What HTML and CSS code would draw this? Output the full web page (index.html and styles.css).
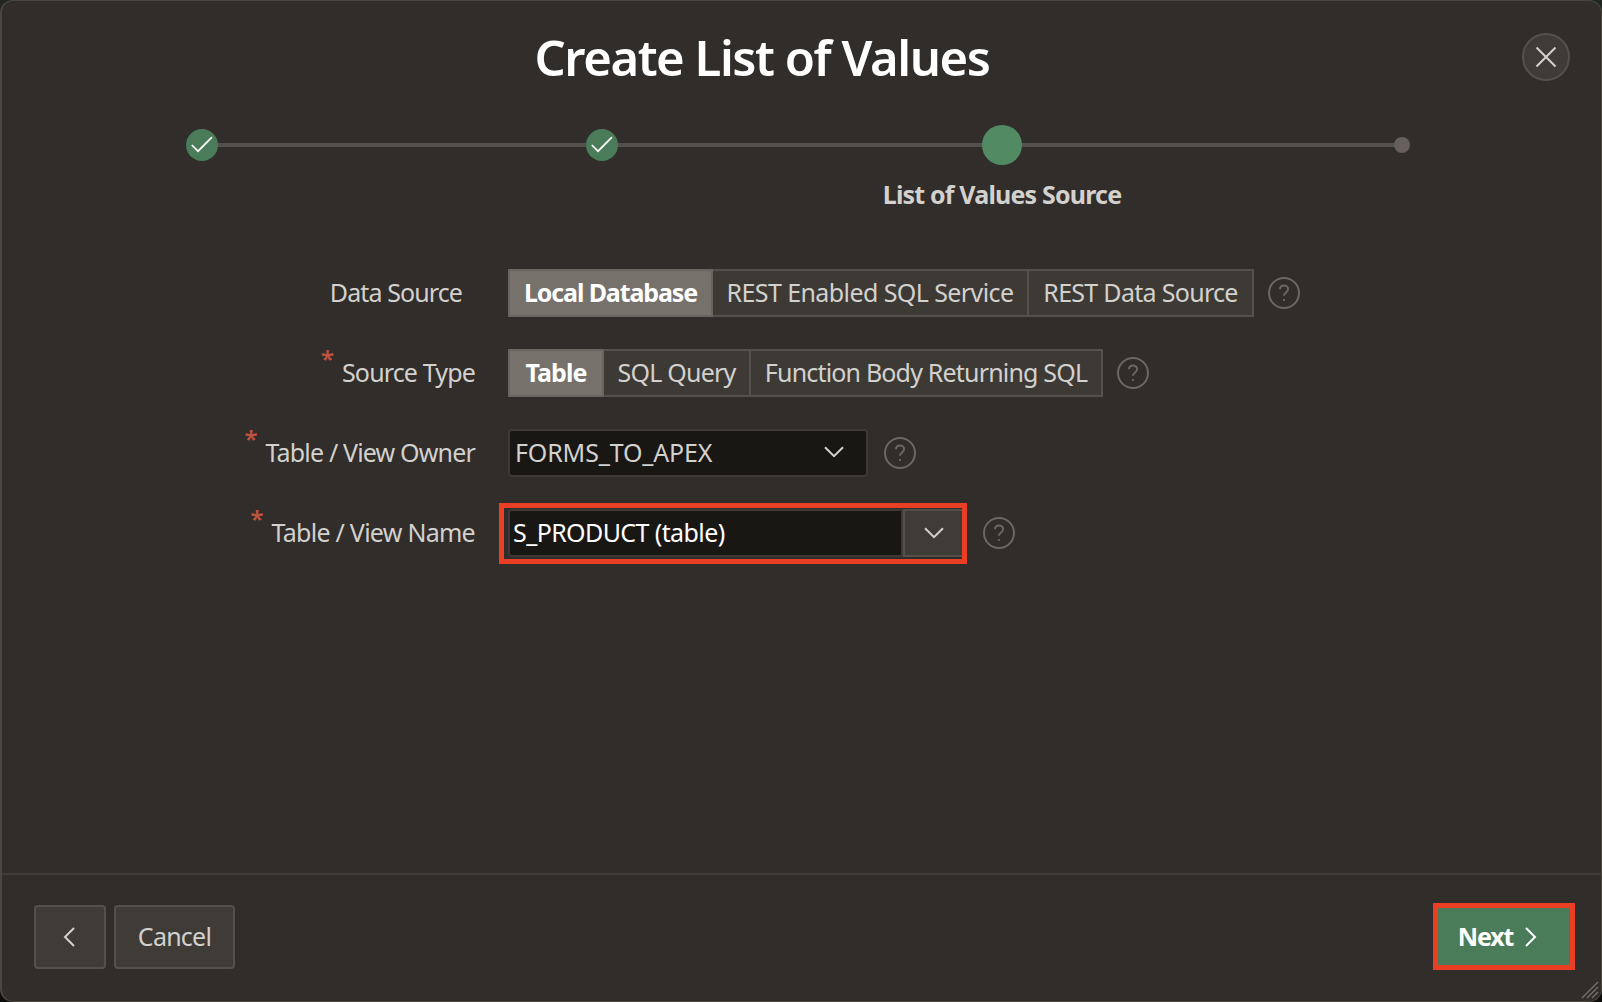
FILE: index.html
```html
<!DOCTYPE html>
<html lang="en">
<head>
<meta charset="utf-8">
<title>Create List of Values</title>
<link rel="stylesheet" href="styles.css">
</head>
<body>
<svg width="0" height="0" class="defs" aria-hidden="true">
  <symbol id="help" viewBox="0 0 32 32"><circle cx="16" cy="16" r="15"/><path d="M12 12.300c0-2.300 1.700-3.700 4-3.700s4.100 1.500 4.100 3.600c0 3.100-4.100 3.400-4.100 6.600M16 22.200v1.900"/></symbol>
  <symbol id="down" viewBox="0 0 20 12"><path d="M1 1.200 10 10.200l9-9"/></symbol>
  <symbol id="check" viewBox="0 0 32 32"><path d="M5.800 16l6.200 6.200 14-14"/></symbol>
</svg>
<main class="dialog">
  <header class="header">
    <h1 class="title">Create List of Values</h1>
    <button class="close" aria-label="Close"><svg width="22" height="22" viewBox="0 0 22 22"><path d="M1.500 1.500l19 19M20.500 1.500l-19 19"/></svg></button>
  </header>
  <ol class="steps">
    <li class="step"><span class="dot done"><svg><use href="#check"/></svg></span></li>
    <li class="step"><span class="dot done"><svg><use href="#check"/></svg></span></li>
    <li class="step"><span class="dot current"></span><span class="step-label">List of Values Source</span></li>
    <li class="step"><span class="dot"></span></li>
  </ol>
  <section class="form">
    <div class="row">
      <label class="label optional"><span class="ls-data">Data Source</span></label>
      <div class="pills">
        <span class="pill selected w-local ls-local">Local Database</span><span class="pill w-rest ls-rest">REST Enabled SQL Service</span><span class="pill w-restdata ls-restdata">REST Data Source</span>
      </div>
      <svg class="help"><use href="#help"/></svg>
    </div>
    <div class="row">
      <label class="label"><span class="req">*</span><span class="ls-type">Source Type</span></label>
      <div class="pills">
        <span class="pill selected w-table ls-table">Table</span><span class="pill w-query ls-query">SQL Query</span><span class="pill w-func ls-func">Function Body Returning SQL</span>
      </div>
      <svg class="help"><use href="#help"/></svg>
    </div>
    <div class="row">
      <label class="label"><span class="req">*</span><span class="ls-owner">Table / View Owner</span></label>
      <div class="select"><span class="ls-value">FORMS_TO_APEX</span><svg class="chevron"><use href="#down"/></svg></div>
      <svg class="help help-wide"><use href="#help"/></svg>
    </div>
    <div class="row">
      <label class="label"><span class="req">*</span><span class="ls-name">Table / View Name</span></label>
      <div class="highlight">
        <div class="input">S_PRODUCT (table)</div>
        <button class="pick" aria-label="Open list"><svg class="chevron"><use href="#down"/></svg></button>
      </div>
      <svg class="help help-wide"><use href="#help"/></svg>
    </div>
  </section>
  <footer class="footer">
    <button class="btn back" aria-label="Back"><svg width="12" height="20" viewBox="0 0 12 20"><path d="M11 1 2 10l9 9"/></svg></button>
    <button class="btn cancel">Cancel</button>
    <button class="btn next"><span>Next</span><svg width="12" height="20" viewBox="0 0 12 20"><path d="M1 1l9 9-9 9"/></svg></button>
  </footer>
  <svg class="grip" width="18" height="18" viewBox="0 0 18 18"><path d="M1 17 17 1M6 17 17 6M11 17l6-6"/></svg>
</main>
</body>
</html>
```
FILE: styles.css
```css
* { box-sizing: border-box; }

body {
  margin: 0;
  width: 1602px;
  height: 1002px;
  overflow: hidden;
  background: linear-gradient(#20281f, #0c0c0b);
  color: #d3d1ce;
  font: 400 25px/34px "Noto Sans", "Open Sans", sans-serif;
}

.defs { position: absolute; }

svg {
  fill: none;
  stroke: currentColor;
  stroke-width: 2;
}

button {
  font: inherit;
  color: inherit;
  margin: 0;
  padding: 0;
}

.dialog {
  position: relative;
  display: flex;
  flex-direction: column;
  width: 1602px;
  height: 1002px;
  background: #312d2a;
  border: 1px solid #4b4740;
  border-left-width: 2px;
  border-radius: 13px;
}

.header {
  display: flex;
  height: 124px;
  padding: 32px 31px 0 0;
}

.title {
  flex: 1;
  margin: -9px 0 0;
  text-align: center;
  color: #fff;
  font-size: 49px;
  font-weight: 600;
  line-height: 66px;
  letter-spacing: -1.450px;
}

.close {
  display: flex;
  align-items: center;
  justify-content: center;
  width: 48px;
  height: 48px;
  background: #3f3b36;
  border: 2px solid #54504b;
  border-radius: 50%;
}

.steps {
  display: flex;
  height: 144px;
  margin: 0;
  padding: 0;
  list-style: none;
}

.step {
  position: relative;
  display: flex;
  flex-direction: column;
  align-items: center;
  width: 400px;
  flex: none;
}

.step + .step::before {
  content: "";
  position: absolute;
  top: 18px;
  left: -200px;
  width: 400px;
  height: 4px;
  background: #54504c;
}

.dot {
  z-index: 1;
  width: 16px;
  height: 16px;
  margin: 12px 0;
  border-radius: 50%;
  background: #665f5b;
}

.dot.done {
  width: 32px;
  height: 32px;
  margin: 4px 0;
  background: #4a7c59;
  color: #fff;
}

.dot svg {
  display: block;
  width: 32px;
  height: 32px;
  stroke-width: 1.700;
}

.dot.current {
  width: 40px;
  height: 40px;
  margin: 0;
  background: #528a63;
}

.step-label {
  margin-top: 12px;
  font-weight: 700;
  letter-spacing: -0.820px;
}

.form { flex: 1; }

.row {
  display: flex;
  align-items: center;
  height: 48px;
  margin-bottom: 32px;
}

.label {
  display: flex;
  justify-content: flex-end;
  width: 473px;
  margin: -2px 33px 0 0;
}

.label.optional { padding-right: 13px; }

.req {
  margin: -13px 8px 13px 0;
  color: #c0533f;
  font-size: 24px;
  font-weight: 600;
}

.pills { display: flex; }

.pill {
  height: 48px;
  border: 2px solid #54504c;
  border-left-width: 0;
  background: #3d3a35;
  text-align: center;
  line-height: 43px;
  white-space: nowrap;
}

.pill.selected {
  border: 2px solid #69645f;
  background: #77716c;
  color: #fff;
  font-weight: 700;
}

.w-local { width: 205px; }
.w-rest { width: 316px; }
.w-restdata { width: 225px; }
.w-table { width: 96px; }
.w-query { width: 147px; }
.w-func { width: 352px; }

.ls-data { letter-spacing: -0.900px; }
.ls-type { letter-spacing: -0.850px; }
.ls-owner { letter-spacing: -0.830px; }
.ls-name { letter-spacing: -0.730px; }
.ls-local { letter-spacing: -1.120px; }
.ls-rest { letter-spacing: -0.580px; }
.ls-restdata { letter-spacing: -0.700px; }
.ls-table { letter-spacing: -0.900px; }
.ls-query { letter-spacing: -0.780px; }
.ls-func { letter-spacing: -0.820px; }
.ls-value { letter-spacing: -0.150px; }

.help {
  width: 32px;
  height: 32px;
  margin-left: 14px;
  color: #6b6762;
}

.help-wide { margin-left: 15.500px; }

.select {
  display: flex;
  align-items: center;
  justify-content: space-between;
  width: 360px;
  height: 48px;
  padding: 0 22px 2px 5px;
  background: #191714;
  border: 2px solid #3d3935;
  border-radius: 4px;
}

.chevron {
  width: 20px;
  height: 12px;
}

.highlight {
  display: flex;
  width: 468px;
  height: 61px;
  margin: 0 0 0 -9px;
  padding: 1px 0 2px 4px;
  border: 5px solid #ea3f24;
}

.input {
  flex: 1;
  height: 48px;
  padding-left: 3px;
  background: #191714;
  border: 2px solid #3d3935;
  border-radius: 4px 0 0 4px;
  color: #fff;
  line-height: 43px;
  letter-spacing: -0.600px;
}

.pick {
  display: flex;
  align-items: center;
  justify-content: center;
  width: 59px;
  height: 48px;
  padding-left: 1px;
  background: #3f3b36;
  border: 2px solid #54504c;
  border-right-width: 0;
}

.footer {
  display: flex;
  gap: 8px;
  height: 128px;
  padding: 30px 26px 0 32px;
  border-top: 2px solid #3f3b38;
}

.btn {
  display: flex;
  align-items: center;
  justify-content: center;
  height: 64px;
  border: 2px solid #54504b;
  border-radius: 4px;
  background: #3f3b36;
}

.back {
  width: 72px;
  padding-right: 3px;
}

.cancel {
  width: 121px;
  padding-bottom: 2px;
  letter-spacing: -0.750px;
}

.next {
  gap: 12px;
  width: 142px;
  height: 67px;
  margin: -2px 0 0 auto;
  padding: 0 13px 0 0;
  border: 5px solid #ea3f24;
  border-radius: 0;
  background: #4a7c59;
  color: #fff;
  font-weight: 700;
  letter-spacing: -1.100px;
}

.next span { margin-top: -2px; }

.grip {
  position: absolute;
  right: 2px;
  bottom: 2px;
  color: #75726f;
  stroke-width: 1.300;
}
```
